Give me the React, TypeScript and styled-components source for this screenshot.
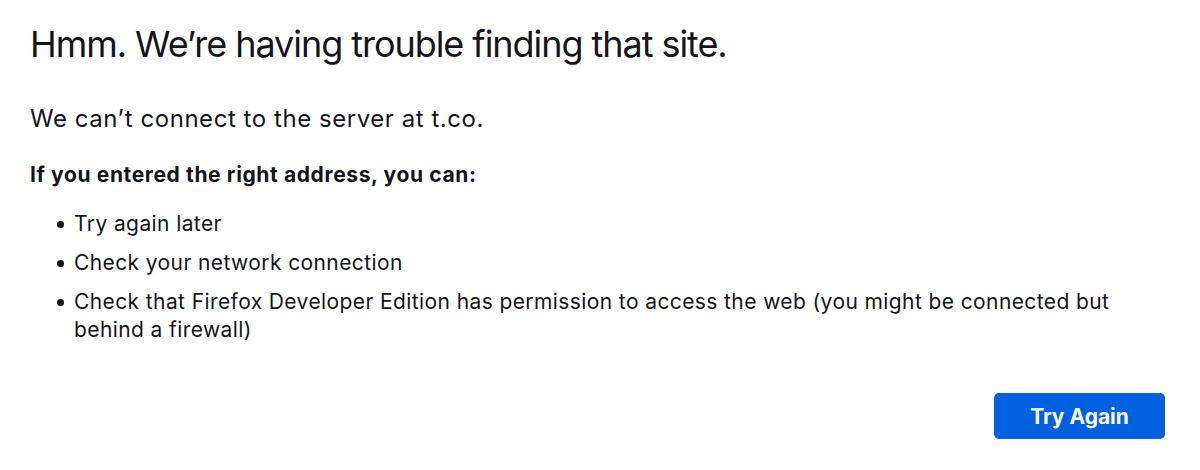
import React from "react";
import styled, { createGlobalStyle } from "styled-components";

const Global = createGlobalStyle`
  html, body { margin: 0; padding: 0; background: #ffffff; }
  body { font-family: Inter, "Noto Sans", sans-serif; color: #15141a; }
`;

const Page = styled.main`
  box-sizing: border-box;
  width: 1200px;
  height: 470px;
  padding: 20px 35px 0 30px;
`;

const Container = styled.div`
  display: flex;
  flex-direction: column;
  width: 1135px;
`;

const Title = styled.h1`
  margin: 0;
  font-size: 36px;
  font-weight: 400;
  line-height: 48px;
  letter-spacing: -1.05px;
`;

const Lead = styled.p`
  margin: 35px 0 0;
  font-size: 24px;
  font-weight: 400;
  line-height: 32px;
  letter-spacing: 0.55px;
`;

const Strong = styled.p`
  margin: 25px 0 0;
  font-size: 21px;
  font-weight: 700;
  line-height: 30px;
  letter-spacing: 0.62px;
`;

const List = styled.ul`
  margin: 20px 0 0;
  padding: 0 0 0 44px;
  list-style: none;
  display: flex;
  flex-direction: column;
  gap: 11px;
`;

const Item = styled.li`
  position: relative;
  font-size: 21px;
  line-height: 28px;
  letter-spacing: 0.4px;

  &::before {
    content: "";
    position: absolute;
    left: -17px;
    top: 10.5px;
    width: 7px;
    height: 7px;
    border-radius: 50%;
    background: #15141a;
  }
`;

const Actions = styled.div`
  display: flex;
  justify-content: flex-end;
  margin-top: 49px;
`;

const Button = styled.button`
  width: 171px;
  height: 46px;
  border: none;
  border-radius: 5px;
  background: #0061e0;
  color: #ffffff;
  font-family: Inter, "Noto Sans", sans-serif;
  font-size: 21px;
  font-weight: 700;
  padding: 0;
  cursor: pointer;
`;

export default function App() {
  return (
    <>
      <Global />
      <Page>
        <Container>
          <Title>Hmm. We’re having trouble finding that site.</Title>
          <Lead>We can’t connect to the server at t.co.</Lead>
          <Strong>If you entered the right address, you can:</Strong>
          <List>
            <Item>Try again later</Item>
            <Item>Check your network connection</Item>
            <Item>
              Check that Firefox Developer Edition has permission to access the
              web (you might be connected but behind a firewall)
            </Item>
          </List>
          <Actions>
            <Button>Try Again</Button>
          </Actions>
        </Container>
      </Page>
    </>
  );
}
